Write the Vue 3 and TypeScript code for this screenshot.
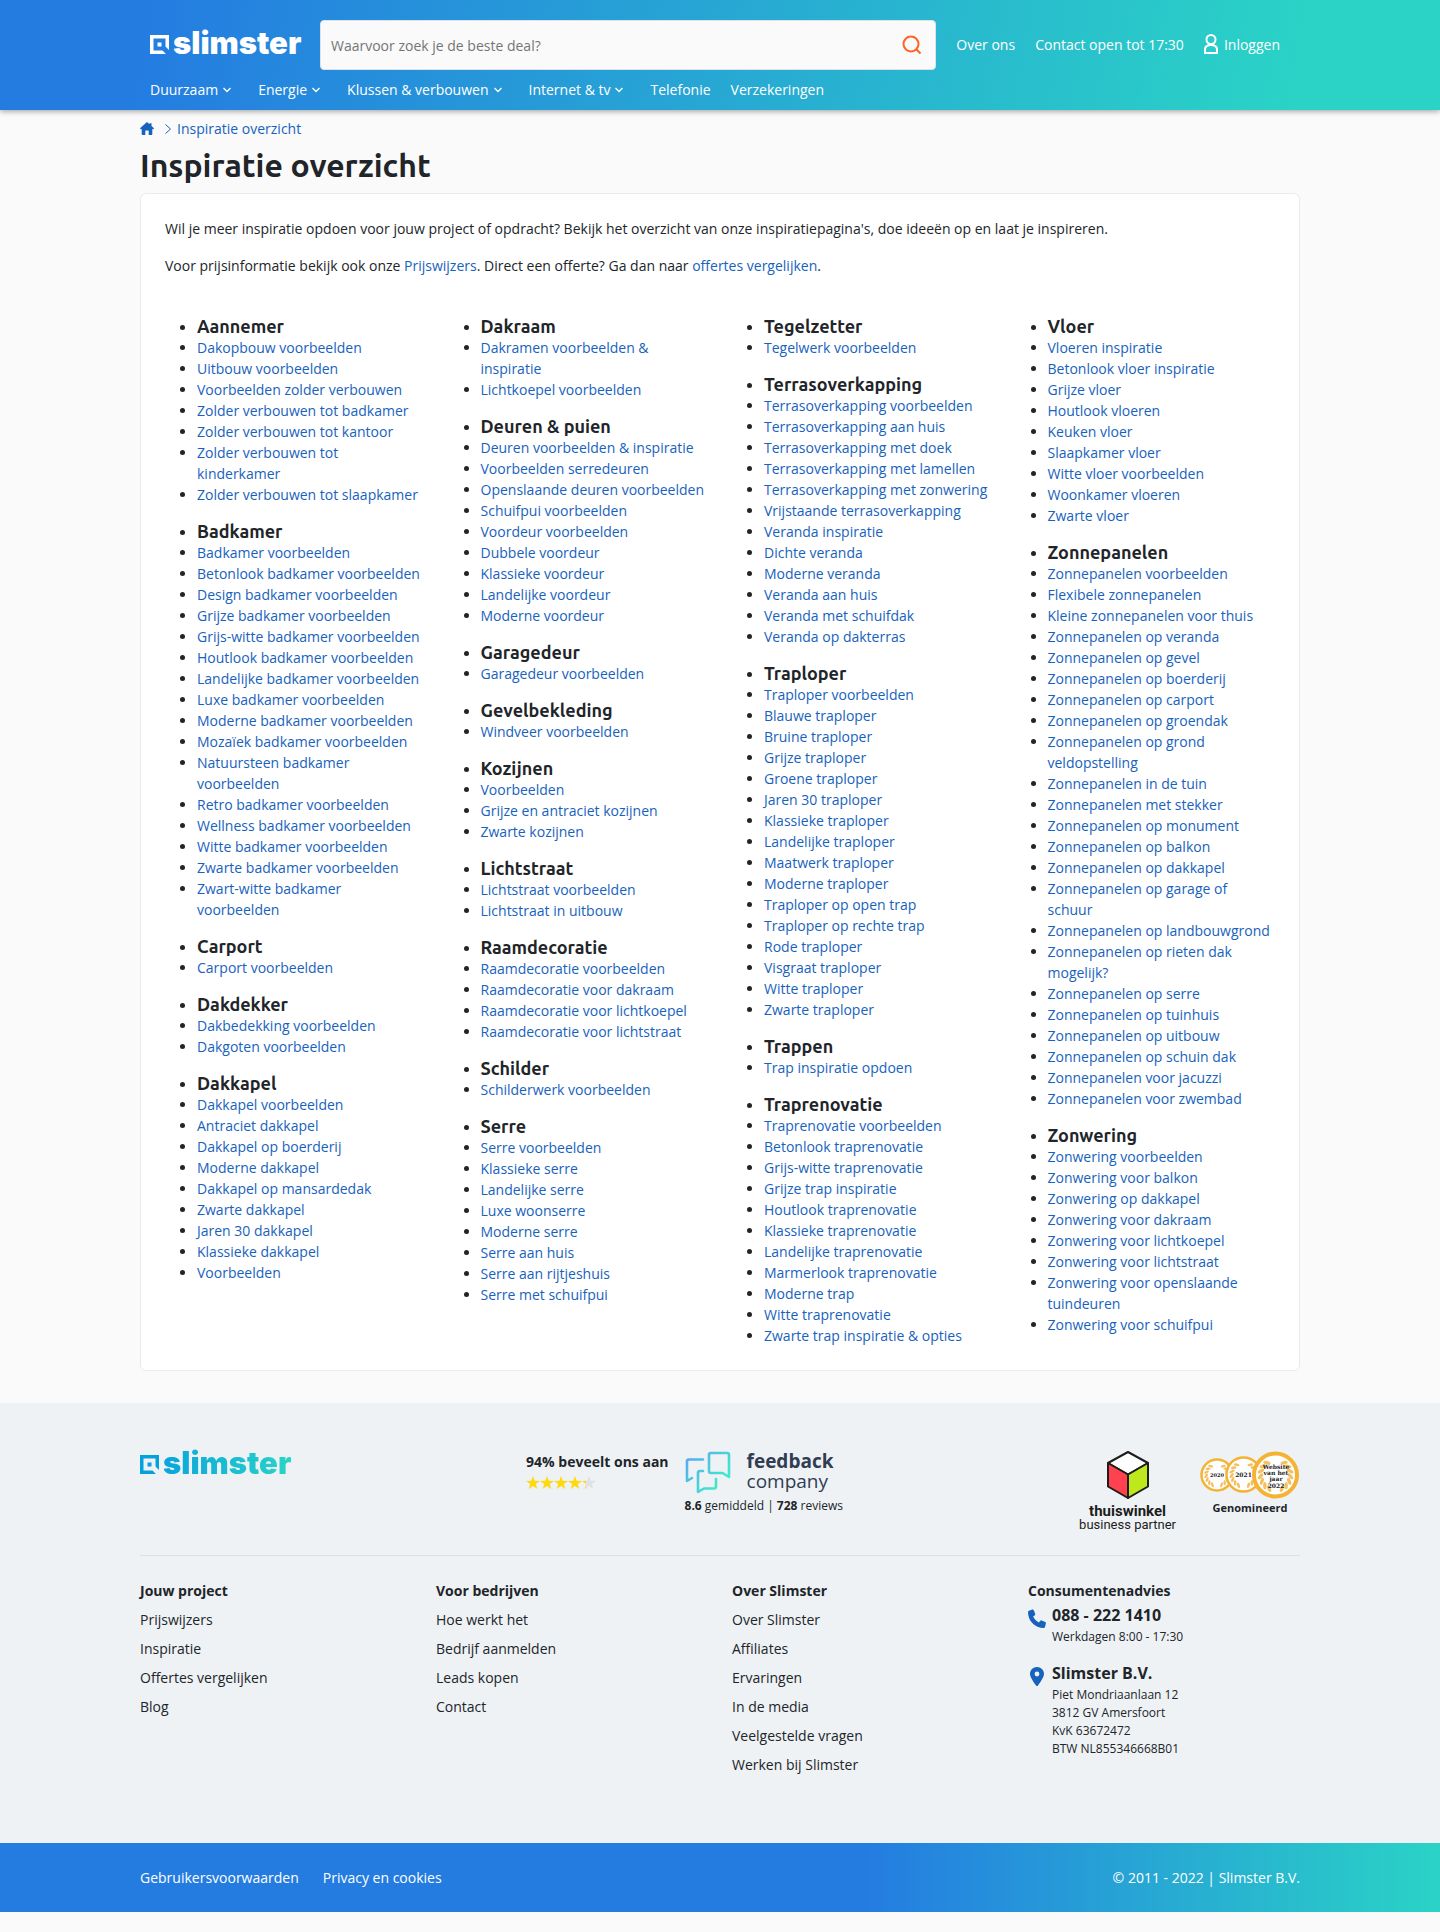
<script setup lang="ts">
import { ref } from 'vue'

interface NavItem { label: string; menu: boolean }
interface Group { title: string; links: string[] }
interface FooterColumn { title: string; links: string[] }
interface Medal { x: number; y: number; r: number; w: number }

const query = ref<string>('')

const nav: NavItem[] = [
  { label: 'Duurzaam', menu: true },
  { label: 'Energie', menu: true },
  { label: 'Klussen & verbouwen', menu: true },
  { label: 'Internet & tv', menu: true },
  { label: 'Telefonie', menu: false },
  { label: 'Verzekeringen', menu: false },
]

const columns: Group[][] = [
  [
    { title: 'Aannemer', links: ['Dakopbouw voorbeelden', 'Uitbouw voorbeelden', 'Voorbeelden zolder verbouwen', 'Zolder verbouwen tot badkamer', 'Zolder verbouwen tot kantoor', 'Zolder verbouwen tot kinderkamer', 'Zolder verbouwen tot slaapkamer'] },
    { title: 'Badkamer', links: ['Badkamer voorbeelden', 'Betonlook badkamer voorbeelden', 'Design badkamer voorbeelden', 'Grijze badkamer voorbeelden', 'Grijs-witte badkamer voorbeelden', 'Houtlook badkamer voorbeelden', 'Landelijke badkamer voorbeelden', 'Luxe badkamer voorbeelden', 'Moderne badkamer voorbeelden', 'Mozaïek badkamer voorbeelden', 'Natuursteen badkamer voorbeelden', 'Retro badkamer voorbeelden', 'Wellness badkamer voorbeelden', 'Witte badkamer voorbeelden', 'Zwarte badkamer voorbeelden', 'Zwart-witte badkamer voorbeelden'] },
    { title: 'Carport', links: ['Carport voorbeelden'] },
    { title: 'Dakdekker', links: ['Dakbedekking voorbeelden', 'Dakgoten voorbeelden'] },
    { title: 'Dakkapel', links: ['Dakkapel voorbeelden', 'Antraciet dakkapel', 'Dakkapel op boerderij', 'Moderne dakkapel', 'Dakkapel op mansardedak', 'Zwarte dakkapel', 'Jaren 30 dakkapel', 'Klassieke dakkapel', 'Voorbeelden'] },
  ],
  [
    { title: 'Dakraam', links: ['Dakramen voorbeelden & inspiratie', 'Lichtkoepel voorbeelden'] },
    { title: 'Deuren & puien', links: ['Deuren voorbeelden & inspiratie', 'Voorbeelden serredeuren', 'Openslaande deuren voorbeelden', 'Schuifpui voorbeelden', 'Voordeur voorbeelden', 'Dubbele voordeur', 'Klassieke voordeur', 'Landelijke voordeur', 'Moderne voordeur'] },
    { title: 'Garagedeur', links: ['Garagedeur voorbeelden'] },
    { title: 'Gevelbekleding', links: ['Windveer voorbeelden'] },
    { title: 'Kozijnen', links: ['Voorbeelden', 'Grijze en antraciet kozijnen', 'Zwarte kozijnen'] },
    { title: 'Lichtstraat', links: ['Lichtstraat voorbeelden', 'Lichtstraat in uitbouw'] },
    { title: 'Raamdecoratie', links: ['Raamdecoratie voorbeelden', 'Raamdecoratie voor dakraam', 'Raamdecoratie voor lichtkoepel', 'Raamdecoratie voor lichtstraat'] },
    { title: 'Schilder', links: ['Schilderwerk voorbeelden'] },
    { title: 'Serre', links: ['Serre voorbeelden', 'Klassieke serre', 'Landelijke serre', 'Luxe woonserre', 'Moderne serre', 'Serre aan huis', 'Serre aan rijtjeshuis', 'Serre met schuifpui'] },
  ],
  [
    { title: 'Tegelzetter', links: ['Tegelwerk voorbeelden'] },
    { title: 'Terrasoverkapping', links: ['Terrasoverkapping voorbeelden', 'Terrasoverkapping aan huis', 'Terrasoverkapping met doek', 'Terrasoverkapping met lamellen', 'Terrasoverkapping met zonwering', 'Vrijstaande terrasoverkapping', 'Veranda inspiratie', 'Dichte veranda', 'Moderne veranda', 'Veranda aan huis', 'Veranda met schuifdak', 'Veranda op dakterras'] },
    { title: 'Traploper', links: ['Traploper voorbeelden', 'Blauwe traploper', 'Bruine traploper', 'Grijze traploper', 'Groene traploper', 'Jaren 30 traploper', 'Klassieke traploper', 'Landelijke traploper', 'Maatwerk traploper', 'Moderne traploper', 'Traploper op open trap', 'Traploper op rechte trap', 'Rode traploper', 'Visgraat traploper', 'Witte traploper', 'Zwarte traploper'] },
    { title: 'Trappen', links: ['Trap inspiratie opdoen'] },
    { title: 'Traprenovatie', links: ['Traprenovatie voorbeelden', 'Betonlook traprenovatie', 'Grijs-witte traprenovatie', 'Grijze trap inspiratie', 'Houtlook traprenovatie', 'Klassieke traprenovatie', 'Landelijke traprenovatie', 'Marmerlook traprenovatie', 'Moderne trap', 'Witte traprenovatie', 'Zwarte trap inspiratie & opties'] },
  ],
  [
    { title: 'Vloer', links: ['Vloeren inspiratie', 'Betonlook vloer inspiratie', 'Grijze vloer', 'Houtlook vloeren', 'Keuken vloer', 'Slaapkamer vloer', 'Witte vloer voorbeelden', 'Woonkamer vloeren', 'Zwarte vloer'] },
    { title: 'Zonnepanelen', links: ['Zonnepanelen voorbeelden', 'Flexibele zonnepanelen', 'Kleine zonnepanelen voor thuis', 'Zonnepanelen op veranda', 'Zonnepanelen op gevel', 'Zonnepanelen op boerderij', 'Zonnepanelen op carport', 'Zonnepanelen op groendak', 'Zonnepanelen op grond veldopstelling', 'Zonnepanelen in de tuin', 'Zonnepanelen met stekker', 'Zonnepanelen op monument', 'Zonnepanelen op balkon', 'Zonnepanelen op dakkapel', 'Zonnepanelen op garage of schuur', 'Zonnepanelen op landbouwgrond', 'Zonnepanelen op rieten dak mogelijk?', 'Zonnepanelen op serre', 'Zonnepanelen op tuinhuis', 'Zonnepanelen op uitbouw', 'Zonnepanelen op schuin dak', 'Zonnepanelen voor jacuzzi', 'Zonnepanelen voor zwembad'] },
    { title: 'Zonwering', links: ['Zonwering voorbeelden', 'Zonwering voor balkon', 'Zonwering op dakkapel', 'Zonwering voor dakraam', 'Zonwering voor lichtkoepel', 'Zonwering voor lichtstraat', 'Zonwering voor openslaande tuindeuren', 'Zonwering voor schuifpui'] },
  ],
]

const footerColumns: FooterColumn[] = [
  { title: 'Jouw project', links: ['Prijswijzers', 'Inspiratie', 'Offertes vergelijken', 'Blog'] },
  { title: 'Voor bedrijven', links: ['Hoe werkt het', 'Bedrijf aanmelden', 'Leads kopen', 'Contact'] },
  { title: 'Over Slimster', links: ['Over Slimster', 'Affiliates', 'Ervaringen', 'In de media', 'Veelgestelde vragen', 'Werken bij Slimster'] },
]

const star = 'M7 0 8.7 4.8 14 5 9.8 8.1 11.3 13 7 10.1 2.7 13 4.2 8.1 0 5 5.3 4.8Z'

// Leaves of a laurel wreath, as angles in degrees clockwise from the top
const leafAngles: number[] = [35, 55, 75, 95, 115, 135, 155, 205, 225, 245, 265, 285, 305, 325]
const medals: Medal[] = [
  { x: 17, y: 24, r: 15.5, w: 2.5 },
  { x: 43.5, y: 23.5, r: 17, w: 2.5 },
  { x: 75.5, y: 24, r: 21.5, w: 4 },
]
</script>

<template>
  <div class="page">
    <header class="header">
      <div class="header-inner">
        <div class="top">
          <a href="#" class="brand" aria-label="Slimster">
            <svg class="brand-mark" viewBox="0 0 19 19" aria-hidden="true">
              <path d="M0 0H19V15L15.5 11.5V3.5H3.5V15.5H12.500L16 19H0Z" />
              <path d="M7.5 7.5h4v4h-4z" />
            </svg>
            <span class="brand-name">slimster</span>
          </a>
          <form class="search" role="search" @submit.prevent>
            <input v-model="query" class="search-input" type="text" placeholder="Waarvoor zoek je de beste deal?" aria-label="Zoeken" />
            <button class="search-button" type="submit" aria-label="Zoek">
              <svg width="20" height="20" viewBox="0 0 20 20" fill="none" stroke="#ff6320" stroke-width="2" aria-hidden="true">
                <circle cx="9" cy="9" r="7.5" />
                <path d="M14 14 18.500 18.500" />
              </svg>
            </button>
          </form>
          <div class="top-links">
            <a href="#">Over ons</a>
            <a href="#">Contact open tot 17:30</a>
            <a href="#" class="login">
              <svg width="14" height="20" viewBox="0 0 14 20" fill="none" stroke="#fff" stroke-width="2" aria-hidden="true">
                <circle cx="7" cy="5.5" r="4.5" />
                <path d="M1 19V15.5C1 12.5 3.5 11 7 11S13 12.5 13 15.5V19Z" />
              </svg>
              Inloggen
            </a>
          </div>
        </div>
        <nav class="nav" aria-label="Hoofdmenu">
          <template v-for="item in nav" :key="item.label">
            <button v-if="item.menu" type="button" class="nav-item">
              {{ item.label }}
              <svg class="chevron" width="8" height="6" viewBox="0 0 8 6" fill="none" stroke="currentColor" stroke-width="1.3" aria-hidden="true"><path d="M.5 1 4 4.5 7.5 1" /></svg>
            </button>
            <a v-else href="#" class="nav-item">{{ item.label }}</a>
          </template>
        </nav>
      </div>
    </header>

    <main class="container">
      <nav class="crumbs" aria-label="Kruimelpad">
        <a href="#" class="home" aria-label="Home">
          <svg width="14" height="13" viewBox="0 0 14 13" aria-hidden="true">
            <path fill="#1762bd" d="M7 0 9.500 2.200V1.200H11.500V4L14 6.300 13 7.400 12.300 6.800V12Q12.300 13 11.300 13H8.700V9Q8.700 8.500 8.200 8.500H5.800Q5.300 8.500 5.300 9V13H2.700Q1.700 13 1.700 12V6.800L1 7.400 0 6.300Z" />
          </svg>
        </a>
        <svg width="6" height="10" viewBox="0 0 6 10" fill="none" stroke="#1762bd" aria-hidden="true"><path d="M.5.5 5.500 5 .5 9.500" /></svg>
        <a href="#">Inspiratie overzicht</a>
      </nav>
      <h1>Inspiratie overzicht</h1>

      <section class="panel">
        <p>Wil je meer inspiratie opdoen voor jouw project of opdracht? Bekijk het overzicht van onze inspiratiepagina's, doe ideeën op en laat je inspireren.</p>
        <p>Voor prijsinformatie bekijk ook onze <a href="#">Prijswijzers</a>. Direct een offerte? Ga dan naar <a href="#">offertes vergelijken</a>.</p>
        <div class="overview">
          <div v-for="(column, i) in columns" :key="i" class="overview-column">
            <ul v-for="group in column" :key="group.title">
              <li><h2>{{ group.title }}</h2></li>
              <li v-for="link in group.links" :key="link"><a href="#">{{ link }}</a></li>
            </ul>
          </div>
        </div>
      </section>
    </main>

    <footer class="footer">
      <div class="container">
        <div class="trust">
          <a href="#" class="brand brand-color" aria-label="Slimster">
            <svg class="brand-mark" viewBox="0 0 19 19" aria-hidden="true">
              <path d="M0 0H19V15L15.5 11.5V3.5H3.5V15.5H12.5L16 19H0Z" />
              <path d="M7.5 7.5h4v4h-4z" />
            </svg>
            <span class="brand-name">slimster</span>
          </a>
          <div class="reviews">
            <div class="recommend">
              <strong>94% beveelt ons aan</strong>
              <svg width="70" height="13" viewBox="0 0 70 13" role="img" aria-label="4,3 van 5 sterren">
                <defs>
                  <linearGradient id="star-part"><stop offset=".3" stop-color="#ffd90f" /><stop offset=".3" stop-color="#dfe2e5" /></linearGradient>
                </defs>
                <path v-for="n in 5" :key="n" :d="star" :transform="`translate(${(n - 1) * 14} 0)`" :fill="n === 5 ? 'url(#star-part)' : '#ffd90f'" />
              </svg>
            </div>
            <div class="feedback">
              <div class="feedback-logo">
                <svg width="46" height="43" viewBox="0 0 46 43" fill="none" stroke="url(#bubble)" stroke-width="2.6" stroke-linecap="round" stroke-linejoin="round" aria-hidden="true">
                  <defs>
                    <linearGradient id="bubble" gradientUnits="userSpaceOnUse" x1="4" y1="6" x2="38" y2="36"><stop offset="0" stop-color="#5aa9f2" /><stop offset="1" stop-color="#3cf0c8" /></linearGradient>
                  </defs>
                  <path d="M26 2H42Q44 2 44 4V26L37.500 22H26Q24 22 24 20V4Q24 2 26 2Z" />
                  <path d="M18 8.500H4Q2 8.500 2 10.500V30L7 27" />
                  <path d="M18 20H15Q13 20 13 22V41L19 37.500H29Q31 37.500 31 35.500V28" />
                </svg>
                <div class="feedback-name"><b>feedback</b><span>company</span></div>
              </div>
              <div class="score"><b>8.6</b> gemiddeld | <b>728</b> reviews</div>
            </div>
          </div>
          <div class="marks">
            <div class="partner">
              <svg width="42" height="48" viewBox="0 0 42 48" stroke="#1d1d1b" stroke-width="2" stroke-linejoin="round" aria-hidden="true">
                <path d="M21 1 41 12 21 23.500 1 12Z" fill="#fff" />
                <path d="M1 12 21 23.500V47L1 35.500Z" fill="#ff4150" />
                <path d="M41 12 21 23.500V47L41 35.500Z" fill="#bfe81c" />
              </svg>
              <b>thuiswinkel</b>
              <span>business partner</span>
            </div>
            <div class="award">
              <svg width="100" height="48" viewBox="0 0 100 48" role="img" aria-label="Website van het jaar">
                <g v-for="m in medals" :key="m.x">
                  <circle :cx="m.x" :cy="m.y" :r="m.r" fill="#fff" stroke="#f5b335" :stroke-width="m.w" />
                  <ellipse v-for="a in leafAngles" :key="a" :cx="m.x" :cy="m.y - m.r * 0.7" :rx="m.r * 0.08" :ry="m.r * 0.17" fill="#f3c062" :transform="`rotate(${a} ${m.x} ${m.y}) rotate(${a < 180 ? 45 : -45} ${m.x} ${m.y - m.r * 0.7})`" />
                </g>
                <g class="award-text" text-anchor="middle">
                  <text x="17" y="26" font-size="5">2020</text>
                  <text x="43.5" y="26" font-size="6">2021</text>
                  <g font-size="6">
                    <text x="76" y="18">Website</text>
                    <text x="76" y="24">van het</text>
                    <text x="76" y="30">jaar</text>
                    <text x="76" y="37">2022</text>
                  </g>
                </g>
              </svg>
              <b>Genomineerd</b>
            </div>
          </div>
        </div>

        <div class="footer-grid">
          <div v-for="column in footerColumns" :key="column.title" class="footer-column">
            <h3>{{ column.title }}</h3>
            <a v-for="link in column.links" :key="link" href="#">{{ link }}</a>
          </div>
          <div class="contact">
            <h3>Consumentenadvies</h3>
            <div class="contact-row">
              <svg width="18" height="20" viewBox="0 0 18 20" aria-hidden="true">
                <path fill="#1762bd" d="M1 1.700 4.300.600Q5.300.400 5.800 1.300L7.200 4.900Q7.400 5.700 6.800 6.300L5.100 7.800Q7 11.500 10.800 13.600L12.300 11.700Q12.900 11.100 13.700 11.400L17.300 12.900Q18.100 13.400 17.900 14.300L17 18Q16.700 19 15.700 19 9 19 4.500 14.300 0 9.700 0 3 0 2 1 1.700Z" />
              </svg>
              <div>
                <strong>088 - 222 1410</strong>
                <small>Werkdagen 8:00 - 17:30</small>
              </div>
            </div>
            <div class="contact-row">
              <svg width="18" height="20" viewBox="0 0 18 20" aria-hidden="true">
                <path fill="#1762bd" fill-rule="evenodd" d="M9 0C12.900 0 16 3 16 6.900 16 10 12 15.500 10 18.500Q9 19.700 8 18.500C6 15.500 2 10 2 6.900 2 3 5.100 0 9 0ZM9 4.600A2.400 2.400 0 1 0 9 9.400 2.400 2.400 0 1 0 9 4.600Z" />
              </svg>
              <div>
                <strong>Slimster B.V.</strong>
                <small>Piet Mondriaanlaan 12</small>
                <small>3812 GV Amersfoort</small>
                <small>KvK 63672472</small>
                <small>BTW NL855346668B01</small>
              </div>
            </div>
          </div>
        </div>
      </div>
    </footer>

    <div class="legal">
      <div class="container legal-inner">
        <a href="#">Gebruikersvoorwaarden</a>
        <a href="#">Privacy en cookies</a>
        <span class="copyright">© 2011 - 2022 | Slimster B.V.</span>
      </div>
    </div>
  </div>
</template>

<style>
body {
  background: #fafafa;
}
</style>

<style scoped>
.page {
  font-family: "Open Sans", sans-serif;
  font-size: 14px;
  line-height: 21px;
  color: #212529;
  padding-bottom: 20px;
}
.page *, .page {
  box-sizing: border-box;
}
a {
  color: #1762bd;
  text-decoration: none;
}
svg {
  display: block;
  flex: none;
}
h1, h2, h3, p, ul {
  margin: 0;
}
button {
  font: inherit;
  color: inherit;
  background: none;
  border: 0;
  padding: 0;
  cursor: pointer;
}
.container {
  max-width: 1160px;
  margin: 0 auto;
}

.header {
  background: linear-gradient(100deg, #247ce1 10%, #2ad3c6 90%);
  box-shadow: 0 1px 6px rgba(0, 0, 0, 0.4);
}
.header-inner {
  max-width: 1160px;
  margin: 0 auto;
  padding: 20px 10px 10px;
  color: #fff;
}
.header-inner a {
  color: #fff;
}
.top {
  display: flex;
  align-items: center;
  gap: 20px;
}
.brand {
  display: flex;
  align-items: baseline;
  width: 150px;
  height: 36px;
}
.brand-mark {
  width: 19px;
  height: 19px;
  margin-right: 4px;
  fill: #fff;
}
.brand-name {
  font-family: Inter, sans-serif;
  font-size: 31px;
  font-weight: 900;
  line-height: 31px;
}
.brand-color {
  margin-top: -4px;
}
.brand-color .brand-mark {
  fill: #04a2dd;
}
.brand-color .brand-name {
  color: transparent;
  background: linear-gradient(90deg, #0aa5dc, #2ad3c6);
  background-clip: text;
}
.search {
  flex: 1;
  display: flex;
  align-items: center;
  height: 50px;
  background: #fafafa;
  border: 1px solid #dee2e6;
  border-radius: 4px;
}
.search-input {
  flex: 1;
  min-width: 0;
  height: 48px;
  padding: 0 10px;
  border: 0;
  background: none;
  outline: none;
  font: inherit;
  color: #212529;
}
.search-input::placeholder {
  color: #757575;
}
.search-button {
  padding: 0 13px;
}
.top-links {
  display: flex;
  gap: 20px;
  padding: 0 10px 2px 0;
  white-space: nowrap;
}
.login {
  display: flex;
  align-items: center;
  gap: 6px;
}
.nav {
  display: flex;
  gap: 20px;
  padding-top: 9px;
}
.nav-item {
  display: flex;
  align-items: center;
  gap: 5px;
  line-height: 21px;
}
.chevron {
  margin-right: 7px;
}

.crumbs {
  display: flex;
  align-items: center;
  gap: 6px;
  padding-top: 8px;
}
.home {
  margin-right: 5px;
}
h1 {
  padding: 7px 0 8px;
  font-family: Ubuntu, "Noto Sans", sans-serif;
  font-size: 32px;
  font-weight: 700;
  line-height: 39px;
}
.panel {
  padding: 24px;
  background: #fff;
  border: 1px solid #e9eaec;
  border-radius: 6px;
}
.panel p {
  margin-bottom: 16px;
}
.overview {
  display: grid;
  grid-template-columns: repeat(4, minmax(0, 1fr));
  gap: 24px;
  padding-top: 24px;
}
.overview-column {
  display: flex;
  flex-direction: column;
  gap: 16px;
}
.overview ul {
  padding-left: 32px;
}
h2 {
  font-family: Ubuntu, "Noto Sans", sans-serif;
  font-size: 18px;
  font-weight: 700;
  line-height: 21px;
}

.footer {
  margin-top: 32px;
  padding: 48px 0 68px;
  background: #eef2f5;
}
.trust {
  display: flex;
  justify-content: space-between;
  align-items: flex-start;
  height: 105px;
  border-bottom: 1px solid #dadfe3;
}
.reviews {
  display: flex;
  gap: 16px;
}
.recommend svg {
  margin-top: 4px;
}
.recommend strong {
  font-weight: 700;
}
.feedback-logo {
  display: flex;
  gap: 16px;
}
.feedback-name {
  display: flex;
  flex-direction: column;
  font-size: 19px;
  line-height: 20px;
  color: #303d52;
}
.score {
  padding-top: 3px;
  font-size: 12px;
  line-height: 18px;
}
.marks {
  display: flex;
  gap: 24px;
}
.partner {
  display: flex;
  flex-direction: column;
  align-items: center;
  font-family: Roboto, sans-serif;
  font-size: 13px;
  line-height: 14px;
  color: #1d1d1b;
}
.partner b {
  font-size: 15px;
}
.partner svg {
  margin-bottom: 5px;
}
.award {
  text-align: center;
  font-size: 11px;
  line-height: 18px;
}
.award-text {
  font-family: "DejaVu Serif", serif;
  font-weight: 700;
  fill: #1d1d1b;
}
.footer-grid {
  display: grid;
  grid-template-columns: repeat(4, minmax(0, 1fr));
  gap: 24px;
  padding-top: 24px;
}
.footer-column {
  display: flex;
  flex-direction: column;
  gap: 8px;
}
.footer-column a {
  color: #212529;
}
h3 {
  font-size: 14px;
  font-weight: 700;
  line-height: 21px;
}
.contact-row {
  display: flex;
  gap: 6px;
  margin-bottom: 13px;
}
.contact-row svg {
  margin-top: 8px;
}
.contact-row strong {
  display: block;
  padding-top: 2px;
  font-size: 16px;
  line-height: 25px;
}
.contact-row small {
  display: block;
  font-size: 12px;
  line-height: 18px;
}

.legal {
  padding: 24px 0;
  background: linear-gradient(90deg, #247ce1 60%, #2ad3c6 100%);
}
.legal-inner {
  display: flex;
  gap: 24px;
  color: #fff;
}
.legal a {
  color: #fff;
}
.copyright {
  margin-left: auto;
}
</style>
